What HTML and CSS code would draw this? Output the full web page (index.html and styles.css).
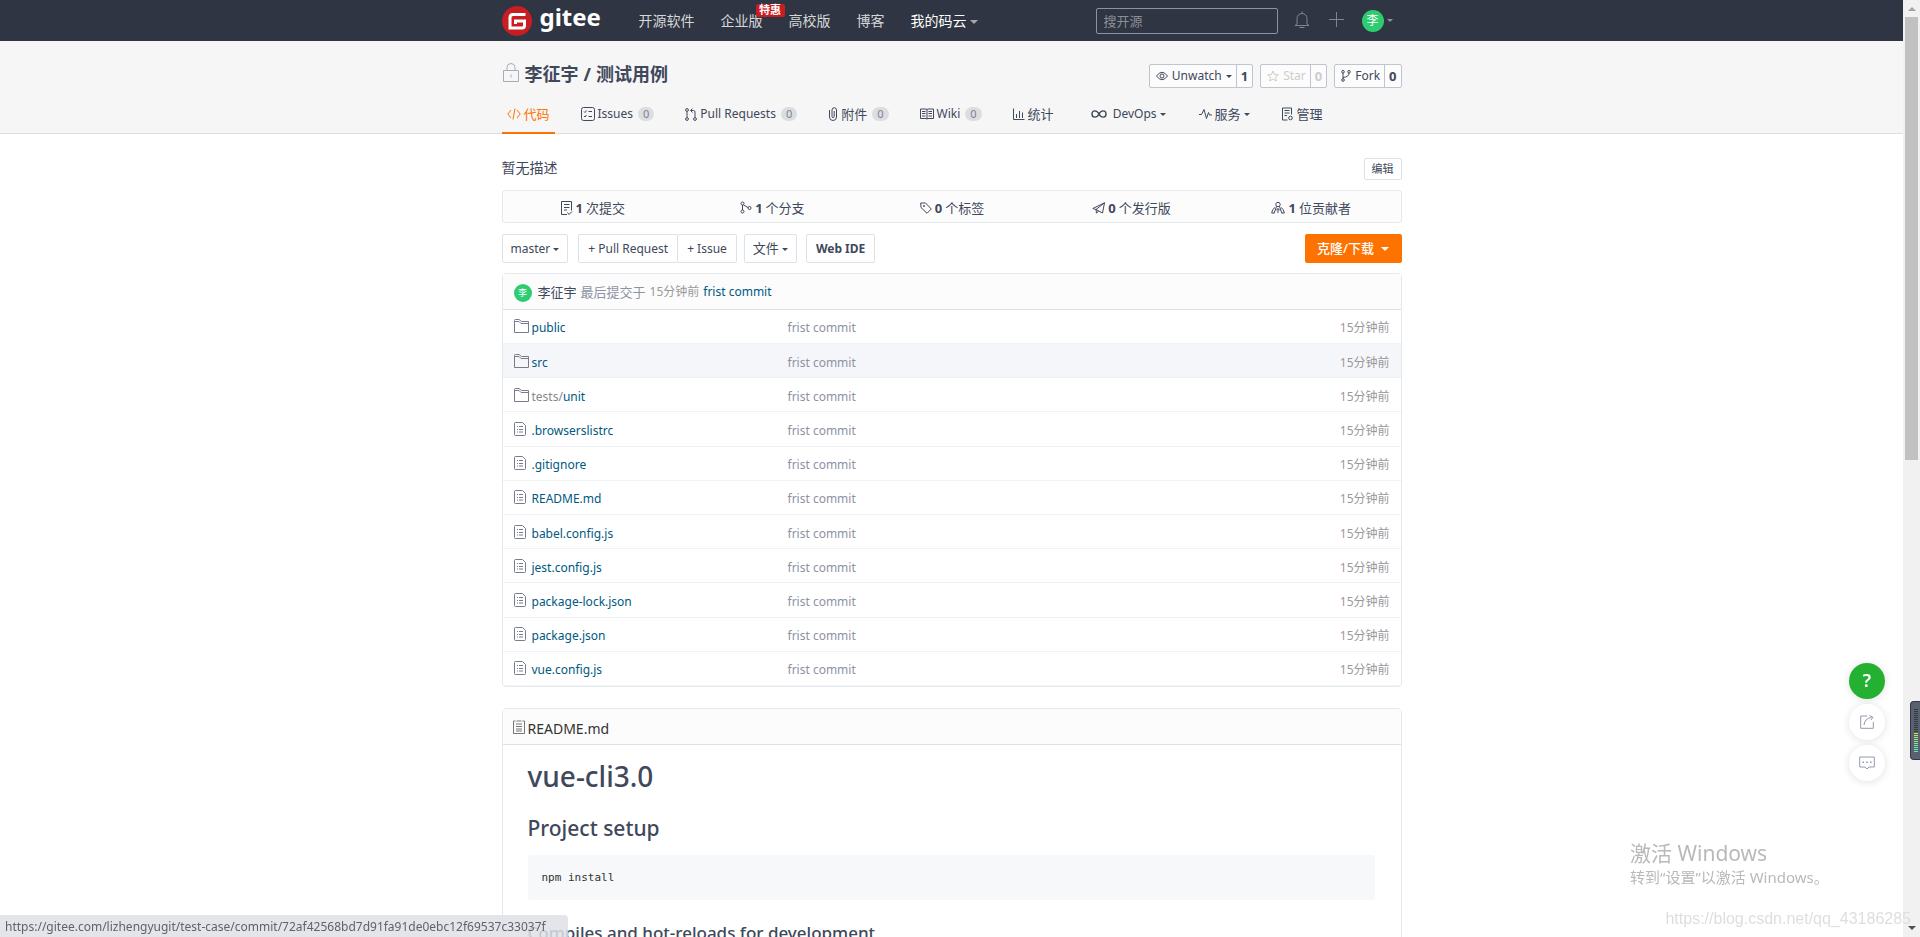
FILE: index.html
```html
<!DOCTYPE html>
<html lang="zh-CN">
<head>
<meta charset="utf-8">
<title>李征宇/测试用例 - 码云 Gitee.com</title>
<link rel="stylesheet" href="styles.css">
</head>
<body>
<svg class="defs" aria-hidden="true">
  <symbol id="folder" viewBox="0 0 15 14"><path d="M.5 13.5V1.5Q.5.5 1.5.5H5L7.5 2.5H14.5V13.5ZM.5 2.5H5L7 4.5H14.5"/></symbol>
  <symbol id="file" viewBox="0 0 12 14"><path d="M1.5.5H8.500L11.500 3.500V12.500Q11.500 13.500 10.500 13.500H1.500Q.5 13.500.5 12.500V1.500Q.5.500 1.500.500ZM3 4.500H4M5 4.500H9M3 7.500H4M5 7.500H9M3 10H4M5 10H9"/></symbol>
</svg>
<div class="page">
  <header class="topbar">
    <div class="wrap topbar-in">
      <a class="logo" href="#">
        <svg class="logo-mark" viewBox="0 0 30 30"><circle cx="15" cy="15" r="15"/><path d="M23.500 8.500H11Q8 8.500 8 11.500V22H20Q22.500 22 22.500 19.500V15H13.500V18"/></svg>
        <span>gitee</span>
      </a>
      <nav class="topnav">
        <a href="#">开源软件</a>
        <a href="#" class="promo">企业版<span class="hot">特惠</span></a>
        <a href="#">高校版</a>
        <a href="#">博客</a>
        <a href="#" class="mine">我的码云<i class="caret"></i></a>
      </nav>
      <input class="search" type="text" placeholder="搜开源" aria-label="搜开源">
      <a href="#" class="bell" aria-label="通知"><svg width="16" height="18" viewBox="0 0 16 18"><path d="M3 13V7.500a5 5 0 0 1 10 0V13L15 14.500H1L3 13M8 .5V2.500M5.500 16.500H10.500"/></svg></a>
      <a href="#" class="plus" aria-label="新建"><svg width="17" height="17" viewBox="0 0 17 17"><path d="M8.500 1V16M1 8.500H16"/></svg></a>
      <a href="#" class="user"><span class="avatar">李</span><i class="caret"></i></a>
    </div>
  </header>

  <section class="repo-head">
    <div class="wrap">
      <div class="title-row">
        <h1 class="repo-title"><svg width="18" height="19" viewBox="0 0 18 19"><path d="M1.500 7.500H16.500V18.500H1.500ZM5 7.500V4.500a4 4 0 0 1 8 0V7.500M9 11.500V14.500"/></svg><a href="#">李征宇</a> / <a href="#">测试用例</a></h1>
        <div class="social">
          <span class="pair"><button><svg width="12" height="10" viewBox="0 0 12 10"><path d="M.5 5Q6-2.500 11.500 5Q6 12.500.5 5Z"/><circle cx="6" cy="5" r="2"/></svg>Unwatch<i class="caret"></i></button><a href="#">1</a></span>
          <span class="pair off"><button disabled><svg width="12" height="12" viewBox="0 0 12 12"><path d="M6 1L7.500 4.500L11.300 4.800L8.400 7.200L9.300 11L6 9L2.700 11L3.600 7.200L.7 4.800L4.500 4.500Z"/></svg>Star</button><a href="#">0</a></span>
          <span class="pair"><button><svg width="10" height="12" viewBox="0 0 10 12"><circle cx="2" cy="1.800" r="1.300"/><circle cx="8" cy="1.800" r="1.300"/><circle cx="2" cy="10" r="1.300"/><path d="M2 3V8.700M2 7.500Q8 7 8 3"/></svg>Fork</button><a href="#">0</a></span>
        </div>
      </div>
      <nav class="tabs">
        <a href="#" class="on zh"><svg width="14" height="12" viewBox="0 0 14 12"><path d="M4 2L.8 6L4 10M10 2L13.200 6L10 10M8 .5L6 11.500"/></svg>代码</a>
        <a href="#"><svg width="14" height="14" viewBox="0 0 14 14"><rect x=".5" y=".5" width="13" height="13" rx="2"/><path d="M3 4.500L4 5.500L5.500 3.500M7.500 4.500H11M3 9L4 10L5.500 8M7.500 9.500H11"/></svg>Issues<b>0</b></a>
        <a href="#"><svg width="12" height="13" viewBox="0 0 12 13"><circle cx="2" cy="2" r="1.400"/><circle cx="2" cy="11" r="1.400"/><circle cx="10" cy="11" r="1.400"/><path d="M2 3.500V9.500M10 9.500V4Q10 2.500 8.500 2.500H6M7.500.5L5.500 2.500L7.500 4.500"/></svg>Pull Requests<b>0</b></a>
        <a href="#" class="zh"><svg width="10" height="14" viewBox="0 0 10 14"><path d="M1.500 3V10a3.500 3.500 0 0 0 7 0V3a2.200 2.200 0 0 0-4.500 0V9.500a1 1 0 0 0 2.200 0V4"/></svg>附件<b>0</b></a>
        <a href="#"><svg width="14" height="12" viewBox="0 0 14 12"><path d="M.5 1H6L7 1.500L8 1H13.500V10.500H8L7 11L6 10.500H.5ZM7 1.500V11M2 3.500H5.500M2 5.500H5.500M2 8H5.500M8.500 3.500H12M8.500 5.500H12M8.500 8H12"/></svg>Wiki<b>0</b></a>
        <a href="#" class="zh"><svg width="12" height="12" viewBox="0 0 12 12"><path d="M.5.5V11.500H11.500M3.500 6V10M6.500 3V10M9.500 4.500V10"/></svg>统计</a>
        <a href="#" class="devops"><svg width="16" height="8" viewBox="0 0 16 8"><path stroke-width="1.400" d="M8 4C10-.2 15-.2 15 4S10 8.200 8 4S1-.2 1 4S6 8.200 8 4Z"/></svg><span>DevOps<i class="caret"></i></span></a>
        <a href="#" class="zh"><svg width="13" height="12" viewBox="0 0 13 12"><path d="M0 6.500H2.500L5 1.500L7.500 10.500L9.500 4.500L10.500 7H13"/></svg>服务<i class="caret"></i></a>
        <a href="#" class="zh"><svg width="13" height="14" viewBox="0 0 13 14"><path d="M6.500 13H1.500V1H10.500V7.500M3.500 3.500H8.500M3.500 6H8.500M3.500 8.500H6"/><circle cx="9.500" cy="11" r="1.800"/></svg>管理</a>
      </nav>
    </div>
  </section>

  <main class="wrap">
    <div class="desc"><span>暂无描述</span><button class="edit">编辑</button></div>
    <div class="stats">
      <a href="#"><svg width="12" height="14" viewBox="0 0 12 14"><path d="M6 13.500H.5V.5H10.500V9.500M3 3.500H8.500M3 6.500H8.500M3 9H6M6.500 11.500L8 13.500L11 10.500"/></svg><b>1</b> 次提交</a>
      <a href="#"><svg width="12" height="13" viewBox="0 0 12 13"><circle cx="2.500" cy="2.500" r="1.500"/><circle cx="2.500" cy="10.500" r="1.500"/><circle cx="9.500" cy="7" r="1.500"/><path d="M2.500 4V9M3.500 4L8 6.500"/></svg><b>1</b> 个分支</a>
      <a href="#"><svg width="12" height="12" viewBox="0 0 12 12"><path d="M.7 1H5.500L11.300 7L7 11.300L1 5.500Z"/><circle cx="4" cy="4" r=".6"/></svg><b>0</b> 个标签</a>
      <a href="#"><svg width="13" height="12" viewBox="0 0 13 12"><path d="M12.500.8L.8 6.500L4 7.500L10.500 11ZM12.500.8L4 7.500L4.500 11.200L6.500 9"/></svg><b>0</b> 个发行版</a>
      <a href="#"><svg width="14" height="13" viewBox="0 0 14 13"><circle cx="7" cy="3.500" r="2.200"/><path d="M5.500 5.500L3 12.500M8.500 5.500L11 12.500M5 9.500L7 7.500L9 9.500M7 7.500V12M4 6.500Q1 8 .7 12H3M10 6.500Q13 8 13.300 12H11"/></svg><b>1</b> 位贡献者</a>
    </div>
    <div class="tools">
      <button class="btn branch">master<i class="caret"></i></button>
      <span class="group"><button class="btn">+ Pull Request</button><button class="btn">+ Issue</button></span>
      <button class="btn doc">文件<i class="caret"></i></button>
      <button class="btn ide">Web IDE</button>
      <button class="btn clone">克隆/下载<i class="caret"></i></button>
    </div>

    <section class="panel files">
      <div class="last"><span class="avatar small">李</span><a class="who" href="#">李征宇</a><span class="said">最后提交于</span><span class="ago">15分钟前</span><a class="msg" href="#">frist commit</a></div>
      <table>
        <tbody>
        <tr><td><svg class="fo"><use href="#folder"/></svg><a href="#">public</a></td><td>frist commit</td><td>15分钟前</td></tr>
        <tr class="hover"><td><svg class="fo"><use href="#folder"/></svg><a href="#">src</a></td><td>frist commit</td><td>15分钟前</td></tr>
        <tr><td><svg class="fo"><use href="#folder"/></svg><a href="#"><span class="dim">tests/</span>unit</a></td><td>frist commit</td><td>15分钟前</td></tr>
        <tr><td><svg class="fi"><use href="#file"/></svg><a href="#">.browserslistrc</a></td><td>frist commit</td><td>15分钟前</td></tr>
        <tr><td><svg class="fi"><use href="#file"/></svg><a href="#">.gitignore</a></td><td>frist commit</td><td>15分钟前</td></tr>
        <tr><td><svg class="fi"><use href="#file"/></svg><a href="#">README.md</a></td><td>frist commit</td><td>15分钟前</td></tr>
        <tr><td><svg class="fi"><use href="#file"/></svg><a href="#">babel.config.js</a></td><td>frist commit</td><td>15分钟前</td></tr>
        <tr><td><svg class="fi"><use href="#file"/></svg><a href="#">jest.config.js</a></td><td>frist commit</td><td>15分钟前</td></tr>
        <tr><td><svg class="fi"><use href="#file"/></svg><a href="#">package-lock.json</a></td><td>frist commit</td><td>15分钟前</td></tr>
        <tr><td><svg class="fi"><use href="#file"/></svg><a href="#">package.json</a></td><td>frist commit</td><td>15分钟前</td></tr>
        <tr><td><svg class="fi"><use href="#file"/></svg><a href="#">vue.config.js</a></td><td>frist commit</td><td>15分钟前</td></tr>
        </tbody>
      </table>
    </section>

    <section class="panel readme">
      <div class="readme-head"><svg width="12" height="14" viewBox="0 0 12 14"><path d="M2.500 1H.5V13.500H11.500V1H9.500M3.500 1H8.500M3 4H9M3 6.500H9M3 9H9M3 11H9"/></svg><span>README.md</span></div>
      <article>
        <h1>vue-cli3.0</h1>
        <h2>Project setup</h2>
        <pre>npm install</pre>
        <h3>Compiles and hot-reloads for development</h3>
      </article>
    </section>
  </main>
</div>

<div class="floats">
  <button class="round help" aria-label="帮助">?</button>
  <button class="round" aria-label="分享"><svg width="14" height="14" viewBox="0 0 14 14"><path d="M7 1H.7V13.300H13.300V7M4 10Q4.500 3.500 11.500 2.500M9.500.5L13 2.300L11 5"/></svg></button>
  <button class="round" aria-label="反馈"><svg width="16" height="14" viewBox="0 0 16 14"><path d="M.7 1H15.300V11H10L8 13L6 11H.7Z"/><path stroke-width="1.600" d="M3.500 6.200H5M7.200 6.200H8.700M11 6.200H12.500"/></svg></button>
</div>
<div class="activate"><p class="big">激活 Windows</p><p>转到“设置”以激活 Windows。</p></div>
<div class="status">https://gitee.com/lizhengyugit/test-case/commit/72af42568bd7d91fa91de0ebc12f69537c33037f</div>
<div class="scrollbar"><i class="up"></i><i class="thumb"></i><i class="down"></i></div>
<div class="meter"><i class="idle"></i><i class="level"></i></div>
<div class="mark">https://blog.csdn.net/qq_43186285</div>
</body>
</html>
```
FILE: styles.css
```css
* { box-sizing: border-box; }
body {
  margin: 0;
  height: 100vh;
  overflow: hidden;
  background: #fff;
  color: #40485b;
  font: 12px/18px "Noto Sans", "Noto Sans CJK SC", sans-serif;
}
a { color: inherit; text-decoration: none; }
button, input { font: inherit; color: inherit; }
svg { fill: none; stroke: currentColor; stroke-width: 1; flex: none; overflow: visible; }
.defs { position: absolute; width: 0; height: 0; }
.page { height: 100vh; margin-right: 17px; overflow: hidden; }
.wrap { width: 900px; max-width: 100%; margin: 0 auto; }
.caret {
  display: inline-block;
  border: 3px solid transparent;
  border-top-color: currentColor;
  border-bottom: 0;
  margin-left: 3px;
  vertical-align: middle;
}

.topbar { background: #2f3542; height: 41px; color: #d6d7d9; }
.topbar-in { display: flex; align-items: center; height: 41px; }
.logo { display: flex; align-items: center; gap: 8px; width: 137px; color: #fff; font: 700 24px/30px "Noto Sans", sans-serif; }
.logo span { padding-bottom: 7px; }
.logo-mark { width: 30px; height: 30px; }
.logo-mark circle { fill: #c71d23; stroke: none; }
.logo-mark path { stroke: #fff; stroke-width: 3; }
.topnav { display: flex; gap: 26px; font-size: 14px; line-height: 20px; white-space: nowrap; }
.promo { position: relative; }
.hot {
  position: absolute; left: 35px; top: -7px;
  width: 29px; height: 13px; border-radius: 2px;
  background: #c71d23; color: #fff;
  font-size: 11px; line-height: 12px; font-weight: 700; text-align: center;
}
.mine { color: #fff; }
.mine .caret { border-width: 4px 4px 0; color: #a5a7ad; }
.search {
  width: 182px; height: 26px; margin-left: auto; padding: 0 7px;
  border: 1px solid #8c92a4; border-radius: 2px; background: transparent; font-size: 13px;
}
.search::placeholder { color: #8b8e96; opacity: 1; }
.bell, .plus { display: flex; padding-bottom: 2px; color: #7f8593; }
.bell { margin-left: 16px; }
.plus { margin-left: 18px; }
.user { display: flex; align-items: center; gap: 3px; margin: 0 9px 0 17px; color: #8c92a4; }
.user .caret { margin-left: 0; }
.avatar {
  display: grid; place-items: center; width: 22px; height: 22px;
  border-radius: 50%; background: #2ecc71; color: #fff; font-size: 12px;
}
.small { width: 18px; height: 18px; margin: 2px 2px 0 0; font-size: 9px; }

.repo-head { background: #f6f6f6; border-bottom: 1px solid #ddd; }
.title-row { display: flex; justify-content: space-between; align-items: flex-start; padding-top: 20px; height: 57px; }
.repo-title { display: flex; align-items: center; gap: 5px; margin: 0; font-size: 18px; line-height: 26px; }
.repo-title svg { margin-bottom: 4px; color: #a9abbd; }
.social { display: flex; gap: 7px; padding-top: 3px; }
.pair { display: flex; border: 1px solid #c0c4d0; border-radius: 2px; background: #fcfcfc; font-size: 12px; line-height: 22px; }
.pair button { display: flex; align-items: center; gap: 4px; border: 0; background: none; padding: 0 4px 0 6px; }
.pair button .caret { margin-left: 0; }
.pair a { border-left: 1px solid #c0c4d0; padding: 0 4px; font-size: 13px; font-weight: 700; }
.off, .off button { color: #ccc; }
.tabs { display: flex; height: 35px; font-size: 12px; line-height: 34px; white-space: nowrap; }
.tabs a { display: flex; align-items: center; gap: 3px; height: 36px; margin-right: 21px; padding: 0 5px 2px; border-bottom: 2px solid transparent; }
.tabs .zh { font-size: 13px; }
.tabs .on { color: #fe7300; border-color: #fe7300; }
.tabs b { margin-left: 2px; padding: 0 5px; border-radius: 7px; background: #dcdddf; color: #7b819a; font-weight: 400; font-size: 11px; line-height: 14px; }
.tabs .devops { gap: 6px; margin: 0 23px 0 6px; }
.tabs .zh .caret { margin-left: 0; }

.desc { display: flex; justify-content: space-between; align-items: center; height: 56px; padding-top: 14px; font-size: 14px; }
.desc span { padding-bottom: 2px; }
.edit { width: 38px; height: 22px; padding: 0; border: 1px solid #dce3e8; border-radius: 2px; background: #fff; font-size: 11px; }
.stats { display: grid; grid-template-columns: repeat(5, 1fr); height: 33px; border: 1px solid #e3e9ed; border-radius: 3px; background: #fcfcfc; font-size: 13px; }
.stats a { display: flex; align-items: center; justify-content: center; gap: 3px; padding: 2px 0 0 1px; }
.tools { display: flex; padding: 11px 0 10px; }
.btn { height: 29px; padding: 0 9px; border: 1px solid #dce3e8; border-radius: 2px; background: #fff; font-size: 12px; white-space: nowrap; }
.branch, .doc { padding: 0 8px; }
.doc { padding-bottom: 2px; font-size: 13px; }
.group { display: flex; margin: 0 7px 0 10px; }
.group .btn + .btn { margin-left: -1px; }
.ide { margin-left: 9px; font-weight: 700; }
.clone { margin-left: auto; width: 97px; padding-bottom: 2px; border-color: #fe7300; background: #fe7300; color: #fff; font-size: 13px; font-weight: 500; }
.clone .caret { border-width: 4px 4px 0; margin-left: 7px; }

.panel { border: 1px solid #e3e9ed; border-radius: 4px; }
.last { display: flex; align-items: center; gap: 4px; height: 36px; padding: 0 11px; border-bottom: 1px solid #dce3e8; background: #fcfcfc; font-size: 13px; }
.said { color: #8c92a4; }
.ago { color: #999; font-size: 12px; }
.msg { font-size: 12px; }
.msg, td a { color: #005980; }
table { width: 100%; height: 376px; border-collapse: collapse; table-layout: fixed; }
tr { border-bottom: 1px solid #f0f3f5; }
.hover { background: #f5f6fa; }
td { padding: 4px 11px 0; color: #8c92a4; white-space: nowrap; }
td:first-child { width: 274px; }
td:last-child { text-align: right; color: #999; }
td svg { height: 14px; margin-right: 3px; vertical-align: -1px; color: #777b8c; }
.fo { width: 15px; }
.fi { width: 12px; margin-right: 6px; }
.dim { color: #888; }

.readme { margin-top: 21px; }
.readme-head { display: flex; align-items: center; gap: 3px; height: 36px; padding: 0 10px; border-bottom: 1px solid #dce3e8; background: #fcfcfc; color: #333; font-size: 14px; }
.readme-head span { padding-top: 4px; }
.readme-head svg { color: #777; }
article { padding: 11px 26px 12px 25px; }
article h1 { margin: 0; font-size: 28px; line-height: 40px; font-weight: 500; }
article h2 { margin: 17px 0 12px; font-size: 21px; line-height: 30px; font-weight: 500; }
article h3 { margin: 21px 0 0; font-size: 17px; line-height: 24px; font-weight: 500; }
pre { margin: 0; padding: 13px 14px; border-radius: 3px; background: #f6f8fa; color: #333; font: 11px/19px "DejaVu Sans Mono", monospace; }

.floats { position: fixed; right: 35px; bottom: 156px; display: grid; gap: 5px; }
.round { display: grid; place-items: center; width: 36px; height: 36px; padding: 0; border: 0; border-radius: 50%; background: #fff; color: #9599ae; box-shadow: 0 1px 8px rgba(0, 0, 0, .12); }
.help { padding-bottom: 2px; background: #24b132; color: #fff; font-size: 18px; font-weight: 600; }
.activate { position: fixed; left: calc(100% - 290px); bottom: 49px; color: #b9b9b9; font-size: 15px; line-height: 22px; white-space: nowrap; }
.activate p { margin: 0; }
.activate .big { font-size: 21px; line-height: 26px; }
.status { position: fixed; left: 0; bottom: 0; min-width: 568px; height: 22px; padding: 0 7px 0 5px; border-radius: 0 4px 0 0; background: rgba(222, 225, 230, .85); color: #5f6368; font-size: 12px; line-height: 23px; white-space: nowrap; }
.scrollbar { position: fixed; right: 0; top: 0; bottom: 0; width: 17px; display: flex; flex-direction: column; align-items: center; background: #f1f1f1; }
.up { border: 4px solid transparent; border-top: 0; border-bottom-color: #a3a3a3; margin: 7px 0 6px; }
.thumb { width: 13px; height: 443px; background: #c1c1c1; }
.down { border: 4px solid transparent; border-bottom: 0; border-top-color: #505050; margin: auto 0 7px; }
.meter { position: fixed; right: 0; bottom: 177px; width: 10px; height: 59px; padding: 7px 2px 6px 3px; border: 1px solid #333845; border-right: 0; border-radius: 4px 0 0 4px; background: #5b6070; display: flex; flex-direction: column; }
.idle { height: 24px; background: repeating-linear-gradient(#333845 0 1px, #5b6070 1px 2px); }
.level { flex: 1; background: repeating-linear-gradient(transparent 0 1px, #5b6070 1px 2px), linear-gradient(#c6e84a, #4ee8c8); }
.mark { position: fixed; right: 9px; bottom: 8px; color: #dedede; font: 16px/20px "Liberation Sans", sans-serif; }
```
